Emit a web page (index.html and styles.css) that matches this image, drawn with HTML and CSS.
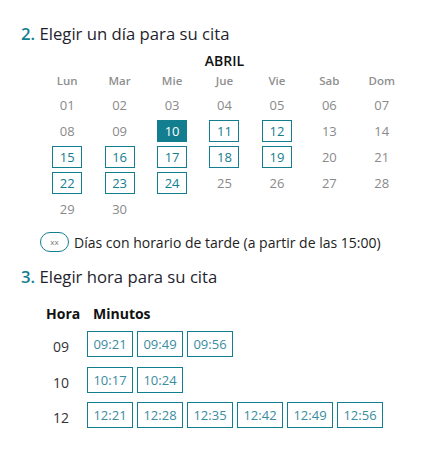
FILE: index.html
```html
<!DOCTYPE html>
<html lang="es">
<head>
    <meta charset="UTF-8">
    <title>Cita previa</title>
    <link rel="stylesheet" href="styles.css">
</head>
<body>
    <div class="page">
        <h2 class="step"><span class="num">2.</span> Elegir un día para su cita</h2>

        <div class="calendar">
            <div class="month">ABRIL</div>
            <div class="days">
                <span class="wd">Lun</span><span class="wd">Mar</span><span class="wd">Mie</span><span class="wd">Jue</span><span class="wd">Vie</span><span class="wd">Sab</span><span class="wd">Dom</span>

                <span class="day">01</span><span class="day">02</span><span class="day">03</span><span class="day">04</span><span class="day">05</span><span class="day">06</span><span class="day">07</span>
                <span class="day">08</span><span class="day">09</span><span class="day selected">10</span><span class="day free">11</span><span class="day free">12</span><span class="day">13</span><span class="day">14</span>
                <span class="day free">15</span><span class="day free">16</span><span class="day free">17</span><span class="day free">18</span><span class="day free">19</span><span class="day">20</span><span class="day">21</span>
                <span class="day free">22</span><span class="day free">23</span><span class="day free">24</span><span class="day">25</span><span class="day">26</span><span class="day">27</span><span class="day">28</span>
                <span class="day">29</span><span class="day">30</span>
            </div>
        </div>

        <div class="legend">
            <span class="pill">xx</span>
            <span>Días con horario de tarde (a partir de las 15:00)</span>
        </div>

        <h2 class="step"><span class="num">3.</span> Elegir hora para su cita</h2>

        <div class="hours">
            <div class="hours-head">
                <span class="col-hour">Hora</span>
                <span class="col-min">Minutos</span>
            </div>
            <div class="hour-row">
                <span class="col-hour">09</span>
                <div class="slots">
                    <span class="slot">09:21</span><span class="slot">09:49</span><span class="slot">09:56</span>
                </div>
            </div>
            <div class="hour-row">
                <span class="col-hour">10</span>
                <div class="slots">
                    <span class="slot">10:17</span><span class="slot">10:24</span>
                </div>
            </div>
            <div class="hour-row">
                <span class="col-hour">12</span>
                <div class="slots">
                    <span class="slot">12:21</span><span class="slot">12:28</span><span class="slot">12:35</span><span class="slot">12:42</span><span class="slot">12:49</span><span class="slot">12:56</span>
                </div>
            </div>
        </div>
    </div>
</body>
</html>
```

FILE: styles.css
```css
body {
    margin: 0;
    font-family: "Open Sans", Arial, sans-serif;
    color: #222;
    background: #fff;
}
.page {
    padding: 22px 0 0 21px;
}
.step {
    margin: 0;
    font-size: 16.7px;
    font-weight: 400;
    line-height: 24px;
    color: #1f1f2e;
}
.step .num {
    color: #137e8f;
    font-weight: 600;
}
.calendar {
    margin: 5px 0 0 20px;
    width: 367px;
}
.month {
    text-align: center;
    font-size: 14px;
    font-weight: 600;
    line-height: 20px;
    color: #111;
}
.days {
    display: grid;
    grid-template-columns: repeat(7, 1fr);
    justify-items: center;
    row-gap: 4px;
}
.wd {
    font-size: 11.5px;
    font-weight: 600;
    color: #8f8f8f;
    line-height: 18px;
    margin-top: 1px;
}
.day {
    width: 28px;
    height: 20px;
    line-height: 20px;
    text-align: center;
    font-size: 13px;
    color: #8a8a8a;
    border: 1px solid transparent;
}
.day.free {
    border-color: #137e8f;
    color: #137e8f;
}
.day.selected {
    background: #137e8f;
    border-color: #137e8f;
    color: #fff;
}
.legend {
    display: flex;
    align-items: center;
    gap: 5px;
    margin: 12px 0 0 19px;
    font-size: 14px;
    color: #222;
}
.pill {
    width: 27px;
    height: 18px;
    border: 1px solid #137e8f;
    border-radius: 10px;
    font-size: 8px;
    line-height: 18px;
    text-align: center;
    color: #777;
}
.legend + .step {
    margin-top: 13px;
}
.hours {
    margin: 15px 0 0 25px;
}
.hours-head {
    display: flex;
    font-size: 14px;
    font-weight: 700;
    color: #111;
    line-height: 20px;
}
.col-hour {
    width: 41px;
    flex-shrink: 0;
}
.hours-head .col-min {
    padding-left: 6px;
}
.hour-row {
    display: flex;
    align-items: center;
    margin-top: 9.5px;
}
.hours-head + .hour-row {
    margin-top: 7px;
}
.hour-row .col-hour {
    font-size: 14px;
    color: #333;
    padding-left: 7px;
    width: 34px;
    padding-top: 5px;
}
.slots {
    display: flex;
    gap: 4px;
}
.slot {
    width: 44px;
    height: 24px;
    line-height: 24px;
    border: 1px solid #137e8f;
    text-align: center;
    font-size: 13px;
    color: #3a8c9e;
}
```
